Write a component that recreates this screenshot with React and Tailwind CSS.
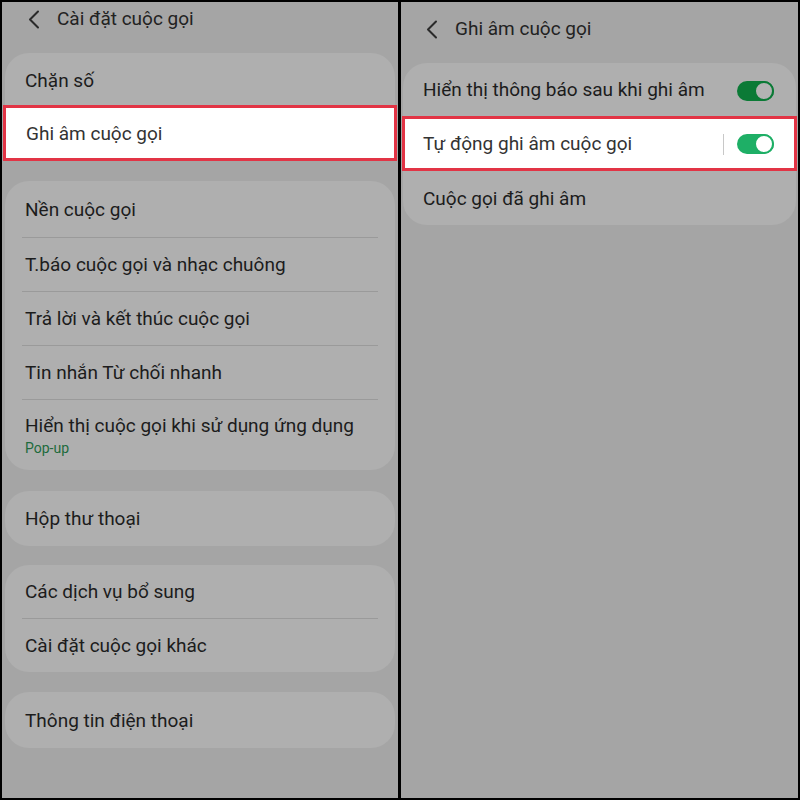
import React from "react";

const font = { fontFamily: 'Roboto, "Noto Sans", sans-serif' };

function Chevron() {
  return (
    <svg width="12" height="19" viewBox="0 0 12 19" className="shrink-0">
      <polyline points="10,1.5 2,9.5 10,17.5" fill="none" stroke="#2a2a2a" strokeWidth="2" strokeLinecap="round" strokeLinejoin="round" />
    </svg>
  );
}

function Row({ children, h = "h-[53px]", sub, pt = "pt-[1px]" }) {
  return (
    <div className={`${h} ${pt} flex flex-col justify-center px-[20px]`}>
      <div className="text-[19px] leading-[24px] text-[#1c1c1c] whitespace-nowrap">{children}</div>
      {sub && <div className="mt-[2px] text-[14px] leading-[17px] text-[#1d6b3c]">{sub}</div>}
    </div>
  );
}

function Divider() {
  return <div className="mx-[17px] h-px bg-[#9a9a9a]" />;
}

function Toggle({ bright }) {
  return (
    <div className={`relative w-[37px] h-[20px] rounded-full ${bright ? "bg-[#1eaf66]" : "bg-[#0b7a36]"}`}>
      <div
        className={`absolute right-0 top-0 w-[20px] h-[20px] rounded-full border-[2px] ${
          bright ? "bg-white border-[#1eaf66]" : "bg-[#b3b3b3] border-[#0b7a36]"
        }`}
      />
    </div>
  );
}

export default function App() {
  return (
    <div className="w-[800px] h-[800px] bg-black flex p-[2px] gap-[3px]" style={font}>
      {/* Left panel */}
      <div className="w-[396px] h-full bg-[#a5a5a5] flex flex-col">
        <div className="h-[34px] flex items-center pl-[26px] gap-[17px]">
          <Chevron />
          <div className="text-[19px] text-[#222]">Cài đặt cuộc gọi</div>
        </div>
        <div className="mt-[17px] mx-[3px] rounded-[24px] bg-[#afafaf] flex flex-col">
          <Row h="h-[52px]" pt="pt-[4px]">Chặn số</Row>
          <div className="-mx-[2px] h-[56px] pt-[3px] bg-white border-[3px] border-[#e23445] flex items-center px-[20px]">
            <div className="text-[19px] text-[#333]">Ghi âm cuộc gọi</div>
          </div>
        </div>
        <div className="mt-[20px] mx-[3px] rounded-[24px] bg-[#afafaf] flex flex-col">
          <Row h="h-[56px]">Nền cuộc gọi</Row>
          <Divider />
          <Row>T.báo cuộc gọi và nhạc chuông</Row>
          <Divider />
          <Row>Trả lời và kết thúc cuộc gọi</Row>
          <Divider />
          <Row>Tin nhắn Từ chối nhanh</Row>
          <Divider />
          <Row h="h-[70px]" sub="Pop-up">Hiển thị cuộc gọi khi sử dụng ứng dụng</Row>
        </div>
        <div className="mt-[21px] mx-[3px] rounded-[24px] bg-[#afafaf] flex flex-col">
          <Row h="h-[55px]">Hộp thư thoại</Row>
        </div>
        <div className="mt-[19px] mx-[3px] rounded-[24px] bg-[#afafaf] flex flex-col">
          <Row>Các dịch vụ bổ sung</Row>
          <Divider />
          <Row>Cài đặt cuộc gọi khác</Row>
        </div>
        <div className="mt-[20px] mx-[3px] rounded-[24px] bg-[#afafaf] flex flex-col">
          <Row h="h-[56px]">Thông tin điện thoại</Row>
        </div>
      </div>

      {/* Right panel */}
      <div className="flex-1 h-full bg-[#a5a5a5] flex flex-col">
        <div className="h-[52px] pt-[2px] flex items-center pl-[25px] gap-[17px]">
          <Chevron />
          <div className="text-[19px] text-[#222]">Ghi âm cuộc gọi</div>
        </div>
        <div className="mt-[9px] mx-[2px] rounded-[24px] bg-[#afafaf] flex flex-col">
          <div className="h-[53px] pt-[2px] flex items-center justify-between pl-[20px] pr-[22px]">
            <div className="text-[19px] text-[#1c1c1c] whitespace-nowrap">Hiển thị thông báo sau khi ghi âm</div>
            <Toggle />
          </div>
          <div className="-mx-[1px] h-[55px] pt-[1px] bg-white border-[3px] border-[#e23445] flex items-center pl-[18px] pr-[20px]">
            <div className="flex-1 text-[19px] text-[#333] pt-[1px]">Tự động ghi âm cuộc gọi</div>
            <div className="w-px h-[21px] bg-[#c8c8c8] mr-[13px]" />
            <Toggle bright />
          </div>
          <Row h="h-[54px]" pt="pt-[2px]">Cuộc gọi đã ghi âm</Row>
        </div>
      </div>
    </div>
  );
}
